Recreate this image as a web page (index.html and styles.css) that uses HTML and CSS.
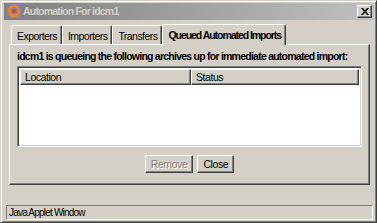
FILE: index.html
```html
<!DOCTYPE html>
<html lang="en">
<head>
    <meta charset="UTF-8">
    <title>Automation For idcm1</title>
    <link rel="stylesheet" href="styles.css">
</head>
<body>
    <div class="window">
        <div class="titlebar">
            <span class="app-icon">
                <svg width="14" height="14" viewBox="0 0 14 14">
                    <rect x="0" y="0" width="14" height="14" fill="#8a78c8"/>
                    <circle cx="7" cy="7" r="5" fill="none" stroke="#e08a1c" stroke-width="3"/>
                    <circle cx="7" cy="7" r="2" fill="#c0501a"/>
                </svg>
            </span>
            <span class="title">Automation For idcm1</span>
            <button class="close">
                <svg width="8" height="7" viewBox="0 0 8 7">
                    <path d="M0 0h2l2 2.5 2-2.5h2l-3 3.5 3 3.5h-2l-2-2.5-2 2.5h-2l3-3.5z" fill="#000"/>
                </svg>
            </button>
        </div>
        <div class="content">
            <div class="tabs">
                <div class="tab">Exporters</div>
                <div class="tab">Importers</div>
                <div class="tab">Transfers</div>
                <div class="tab selected">Queued Automated Imports</div>
            </div>
            <div class="panel">
                <div class="caption">idcm1 is queueing the following archives up for immediate automated import:</div>
                <div class="table">
                    <div class="header">
                        <div class="col loc">Location</div>
                        <div class="col status">Status</div>
                    </div>
                    <div class="rows"></div>
                </div>
                <div class="buttons">
                    <button class="btn" disabled>Remove</button>
                    <button class="btn">Close</button>
                </div>
            </div>
        </div>
        <div class="statusbar">Java Applet Window</div>
    </div>
</body>
</html>
```

FILE: styles.css
```css
body {
    margin: 0;
    padding: 0;
    font-family: "Liberation Sans", Arial, sans-serif;
    font-size: 10px;
    background: #d4d0c8;
}
.window {
    width: 377px;
    height: 223px;
    box-sizing: border-box;
    background: #d4d0c8;
    border: 1px solid;
    border-color: #d4d0c8 #404040 #404040 #d4d0c8;
    box-shadow: inset 1px 1px 0 #fff, inset -1px -1px 0 #808080;
    padding: 2px 2px 2px 3px;
    display: flex;
    flex-direction: column;
    overflow: hidden;
}
.titlebar {
    height: 17px;
    background: linear-gradient(to right, #808080, #c0c0c0);
    display: flex;
    align-items: center;
    padding: 0 2px 0 3px;
}
.app-icon {
    width: 14px;
    height: 14px;
    display: flex;
}
.title {
    color: #d4d0c8;
    font-weight: bold;
    font-size: 10.5px;
    letter-spacing: -0.8px;
    margin-left: 2px;
    flex: 1;
}
.close {
    width: 15px;
    height: 13px;
    padding: 0;
    margin: 0;
    background: #d4d0c8;
    border: 1px solid;
    border-color: #fff #404040 #404040 #fff;
    box-shadow: inset -1px -1px 0 #808080;
    display: flex;
    align-items: center;
    justify-content: center;
}
.content {
    padding: 4px 4px 0 5px;
    height: 166px;
}
.tabs {
    display: flex;
    height: 20px;
    align-items: flex-end;
    padding-left: 2px;
    position: relative;
    z-index: 1;
}
.tab {
    height: 19px;
    box-sizing: border-box;
    padding: 4px 4px 0 5px;
    border-left: 1px solid #fff;
    border-top: 1px solid #fff;
    border-right: 1px solid #404040;
    box-shadow: inset -1px 0 0 #808080;
    border-radius: 2px 2px 0 0;
    letter-spacing: -0.55px;
    font-size: 10.5px;
    color: #000;
}
.tab.selected {
    height: 21px;
    font-weight: bold;
    padding: 4px 4px 0 5px;
    background: #d4d0c8;
    margin-bottom: -1px;
    letter-spacing: -1.05px;
}
.panel {
    height: 141px;
    box-sizing: border-box;
    border: 1px solid;
    border-color: #fff #404040 #404040 #fff;
    box-shadow: inset -1px -1px 0 #808080;
    padding: 5px 7px 0 7px;
    overflow: hidden;
}
.caption {
    font-weight: bold;
    font-size: 10.5px;
    letter-spacing: -0.76px;
    white-space: nowrap;
    height: 13px;
}
.table {
    margin-top: 3px;
    height: 81px;
    box-sizing: border-box;
    border: 1px solid;
    border-color: #808080 #fff #fff #808080;
    box-shadow: inset 1px 1px 0 #404040, inset -1px -1px 0 #d4d0c8;
    padding: 2px;
    display: flex;
    flex-direction: column;
    background: #fff;
}
.header {
    display: flex;
    height: 16px;
    background: #d4d0c8;
}
.col {
    box-sizing: border-box;
    border: 1px solid;
    border-color: #fff #404040 #404040 #fff;
    box-shadow: inset -1px -1px 0 #808080;
    padding: 1px 4px;
    font-size: 10.5px;
    letter-spacing: -0.45px;
}
.loc {
    width: 171px;
}
.status {
    flex: 1;
}
.rows {
    flex: 1;
    background: #fff;
}
.buttons {
    display: flex;
    justify-content: center;
    gap: 4px;
    margin-top: 8px;
}
.btn {
    height: 18px;
    padding: 0 5px;
    font-family: "Liberation Sans", Arial, sans-serif;
    font-size: 10.5px;
    letter-spacing: -0.4px;
    background: #d4d0c8;
    color: #000;
    border: 1px solid;
    border-color: #fff #404040 #404040 #fff;
    box-shadow: inset -1px -1px 0 #808080;
}
.btn:disabled {
    color: #808080;
    text-shadow: 1px 1px 0 #fff;
}
.statusbar {
    margin: 17px 1px 0 2px;
    height: 15px;
    box-sizing: border-box;
    border: 1px solid;
    border-color: #808080 #fff #fff #808080;
    padding: 1px 1px 0 2px;
    letter-spacing: -0.8px;
}
```
